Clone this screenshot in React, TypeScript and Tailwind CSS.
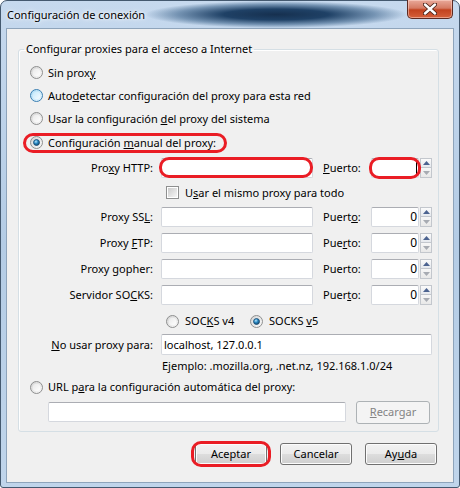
import React, { useId } from 'react';

// small Win7 style widgets

function Radio({ checked = false, hover = false }: { checked?: boolean; hover?: boolean }) {
  const id = useId().replace(/:/g, '');
  return (
    <svg width="13" height="13" viewBox="0 0 13 13" className="shrink-0">
      <defs>
        <linearGradient id={`o${id}`} x1="0" y1="0" x2="1" y2="1">
          <stop offset="0" stopColor={hover ? '#a9dbf6' : '#d2d2d2'} />
          <stop offset="1" stopColor={hover ? '#eaf7fe' : '#fbfbfb'} />
        </linearGradient>
        <linearGradient id={`i${id}`} x1="0" y1="0" x2="1" y2="1">
          <stop offset="0" stopColor={hover ? '#c6eafc' : '#e9e9e9'} />
          <stop offset="1" stopColor={hover ? '#f4fbff' : '#ffffff'} />
        </linearGradient>
        <radialGradient id={`d${id}`} cx="0.4" cy="0.35" r="0.7">
          <stop offset="0" stopColor="#b8e6fc" />
          <stop offset="0.45" stopColor="#2b8ac4" />
          <stop offset="1" stopColor="#0f3f66" />
        </radialGradient>
      </defs>
      <circle cx="6.5" cy="6.5" r="6" fill={`url(#o${id})`} stroke={hover ? '#3c7fb1' : '#8e8f8f'} strokeWidth="1" />
      <circle cx="6.5" cy="6.5" r="3.8" fill={`url(#i${id})`} />
      {checked && <circle cx="6.5" cy="6.5" r="3" fill={`url(#d${id})`} stroke="#1b4a6f" strokeWidth="0.8" />}
    </svg>
  );
}

function Check() {
  return (
    <div className="flex h-[13px] w-[13px] shrink-0 items-center justify-center border border-[#8e8f8f] bg-white">
      <div className="h-[9px] w-[9px] bg-linear-to-br from-[#cbcbcb] to-[#f6f6f6]" />
    </div>
  );
}

function Spinner() {
  return (
    <div className="ml-px flex h-[20px] w-[12px] shrink-0 flex-col">
      <div className="flex h-[10px] items-center justify-center border border-[#c3c7cd] bg-linear-to-b from-[#fbfbfb] to-[#e6e9ee]">
        <svg width="7" height="4" viewBox="0 0 7 4">
          <path d="M3.5 0 L7 4 L0 4Z" fill="#4c6390" />
        </svg>
      </div>
      <div className="flex h-[10px] items-center justify-center border border-t-0 border-[#c3c7cd] bg-linear-to-b from-[#f7f7f7] to-[#e8e8e8]">
        <svg width="7" height="4" viewBox="0 0 7 4">
          <path d="M0 0 L7 0 L3.5 4Z" fill="#a7abb2" />
        </svg>
      </div>
    </div>
  );
}

function Field({ w, h = 20, children, className = '' }: { w: number; h?: number; children?: React.ReactNode; className?: string }) {
  return (
    <div
      className={`relative flex shrink-0 items-center rounded-[2px] border border-[#d5d8de] border-t-[#abadb3] bg-white ${className}`}
      style={{ width: w, height: h }}
    >
      {children}
    </div>
  );
}

function Button({ children, disabled = false }: { children: React.ReactNode; disabled?: boolean }) {
  return (
    <div
      className={
        disabled
          ? 'flex h-[23px] w-[74px] items-center justify-center rounded-[3px] border border-[#adb2b5] bg-[#f4f4f4] text-[#838383]'
          : 'flex h-[22px] w-[72px] items-center justify-center rounded-[3px] border border-[#707070] bg-[linear-gradient(to_bottom,#f2f2f2_0%,#ebebeb_48%,#dddddd_50%,#cfcfcf_100%)] shadow-[inset_0_0_0_1px_#fcfcfc]'
      }
    >
      {children}
    </div>
  );
}

function Ring({ className }: { className: string }) {
  return <div className={`pointer-events-none absolute rounded-[10px] border-[3px] border-[#ea1d25] ${className}`} />;
}

function ProxyRow({ label, port }: { label: React.ReactNode; port: React.ReactNode }) {
  return (
    <div className="flex h-[26px] items-center">
      <div className="w-[123px] text-right">{label}</div>
      <Field w={152} className="ml-[8px]" />
      <div className="ml-[10px] w-[48px]">{port}</div>
      <Field w={48} className="justify-end pr-[1px] text-[12px]">
        0
      </Field>
      <Spinner />
    </div>
  );
}

export default function App() {
  return (
    <div className="h-[488px] w-[460px] overflow-hidden bg-white">
      <div className="flex h-[488px] w-[460px] flex-col rounded-t-[7px] rounded-b-[3px] border border-[#44596f] bg-linear-to-b from-[#c6d9ee] via-[#b4cce5] to-[#c0d5eb] text-[11px] leading-[16px] text-black [font-family:'Noto_Sans','Liberation_Sans',sans-serif]">
        {/* title bar */}
        <div className="flex h-[27px] shrink-0 items-start">
          <span className="ml-[6px] mt-[6px] [text-shadow:0_0_6px_#fff,0_0_3px_#fff]">Configuración de conexión</span>
          <div className="h-[27px] flex-1 bg-[radial-gradient(closest-side,#16304f_0%,#1f4166_40%,rgba(50,90,130,0.55)_75%,rgba(60,100,140,0)_100%)]" />
          <div className="-mt-px mr-[6px] flex h-[19px] w-[46px] items-center justify-center rounded-b-[5px] border border-t-0 border-[#5c2a22] bg-[linear-gradient(to_bottom,#e9a99a_0%,#d57a63_45%,#c2421f_55%,#d5603a_100%)] shadow-[inset_0_0_0_1px_rgba(255,220,210,0.5)]">
            <svg width="14" height="12" viewBox="0 0 14 12">
              <path d="M2 1.5 L12 10.5 M12 1.5 L2 10.5" stroke="#4a2218" strokeWidth="4.2" strokeLinecap="round" />
              <path d="M2 1.5 L12 10.5 M12 1.5 L2 10.5" stroke="#ffffff" strokeWidth="2.4" strokeLinecap="round" />
            </svg>
          </div>
        </div>

        {/* client area */}
        <div className="mx-[5px] flex h-[455px] shrink-0 flex-col border border-[#8ea4bb] bg-[#f0f0f0]">
          <fieldset className="ml-[11px] mr-[14px] mt-[12px] rounded-[3px] border border-[#d5dfe5] pb-[5px] pl-[11px] shadow-[inset_1px_1px_0_#fff]">
            <legend className="-ml-[6px] px-[2px] leading-[16px]">Configurar proxies para el acceso a Internet</legend>
            <div className="flex flex-col pt-[4px]">
              <div className="flex h-[23px] items-center gap-[5px]">
                <Radio />
                <span>
                  Sin prox<u>y</u>
                </span>
              </div>
              <div className="flex h-[23px] items-center gap-[5px]">
                <Radio hover />
                <span>
                  Auto<u>d</u>etectar configuración del proxy para esta red
                </span>
              </div>
              <div className="flex h-[23px] items-center gap-[5px]">
                <Radio />
                <span>
                  Usar la configuración <u>d</u>el proxy del sistema
                </span>
              </div>
              <div className="relative flex h-[25px] items-center gap-[5px]">
                <Radio checked />
                <span>
                  Configuración <u>m</u>anual del proxy:
                </span>
                <Ring className="-left-[7px] top-[3px] bottom-[2px] w-[204px]" />
              </div>

              {/* HTTP row */}
              <div className="flex h-[26px] items-center">
                <div className="w-[123px] text-right">
                  Pro<u>x</u>y HTTP:
                </div>
                <Field w={152} className="ml-[8px]">
                  <Ring className="-left-[3px] -right-[1px] -top-[2px] -bottom-[1px]" />
                </Field>
                <div className="ml-[10px] w-[48px]">
                  <u>P</u>uerto:
                </div>
                <Field w={48} className="justify-end pr-[1px]">
                  <div className="h-[14px] w-px bg-black" />
                  <Ring className="-left-[3px] -right-[3px] -top-[2px] -bottom-[2px]" />
                </Field>
                <Spinner />
              </div>

              <div className="flex h-[23px] items-center gap-[6px] pl-[136px]">
                <Check />
                <span>
                  U<u>s</u>ar el mismo proxy para todo
                </span>
              </div>

              <ProxyRow
                label={
                  <>
                    Proxy SS<u>L</u>:
                  </>
                }
                port={
                  <>
                    Puert<u>o</u>:
                  </>
                }
              />
              <ProxyRow
                label={
                  <>
                    Proxy <u>F</u>TP:
                  </>
                }
                port={
                  <>
                    Pue<u>r</u>to:
                  </>
                }
              />
              <ProxyRow
                label={
                  <>
                    Proxy <u>g</u>opher:
                  </>
                }
                port={<>Puerto:</>}
              />
              <ProxyRow
                label={
                  <>
                    Servidor SO<u>C</u>KS:
                  </>
                }
                port={
                  <>
                    Puer<u>t</u>o:
                  </>
                }
              />

              <div className="flex h-[26px] items-center pl-[136px]">
                <div className="flex w-[84px] items-center gap-[6px]">
                  <Radio />
                  <span>
                    SOC<u>K</u>S v4
                  </span>
                </div>
                <div className="flex items-center gap-[6px]">
                  <Radio checked />
                  <span>
                    SOCKS <u>v</u>5
                  </span>
                </div>
              </div>

              <div className="flex h-[21px] items-center">
                <div className="w-[123px] text-right">
                  <u>N</u>o usar proxy para:
                </div>
                <Field w={271} h={21} className="ml-[8px] pl-[2px]">
                  localhost, 127.0.0.1
                </Field>
              </div>

              <div className="flex h-[21px] items-center pl-[132px]">Ejemplo: .mozilla.org, .net.nz, 192.168.1.0/24</div>

              <div className="flex h-[22px] items-center gap-[5px]">
                <Radio />
                <span>
                  URL p<u>a</u>ra la configuración automática del proxy:
                </span>
              </div>

              <div className="flex h-[28px] items-center pl-[18px]">
                <Field w={298} />
                <div className="ml-[10px]">
                  <Button disabled>
                    <u>R</u>ecargar
                  </Button>
                </div>
              </div>
            </div>
          </fieldset>

          <div className="mt-[11px] flex justify-end gap-[13px] pr-[16px]">
            <div className="relative">
              <Button>Aceptar</Button>
              <Ring className="-left-[4px] -right-[4px] -top-[2px] -bottom-[2px]" />
            </div>
            <Button>Cancelar</Button>
            <Button>
              Ay<u>u</u>da
            </Button>
          </div>
        </div>
      </div>
    </div>
  );
}
